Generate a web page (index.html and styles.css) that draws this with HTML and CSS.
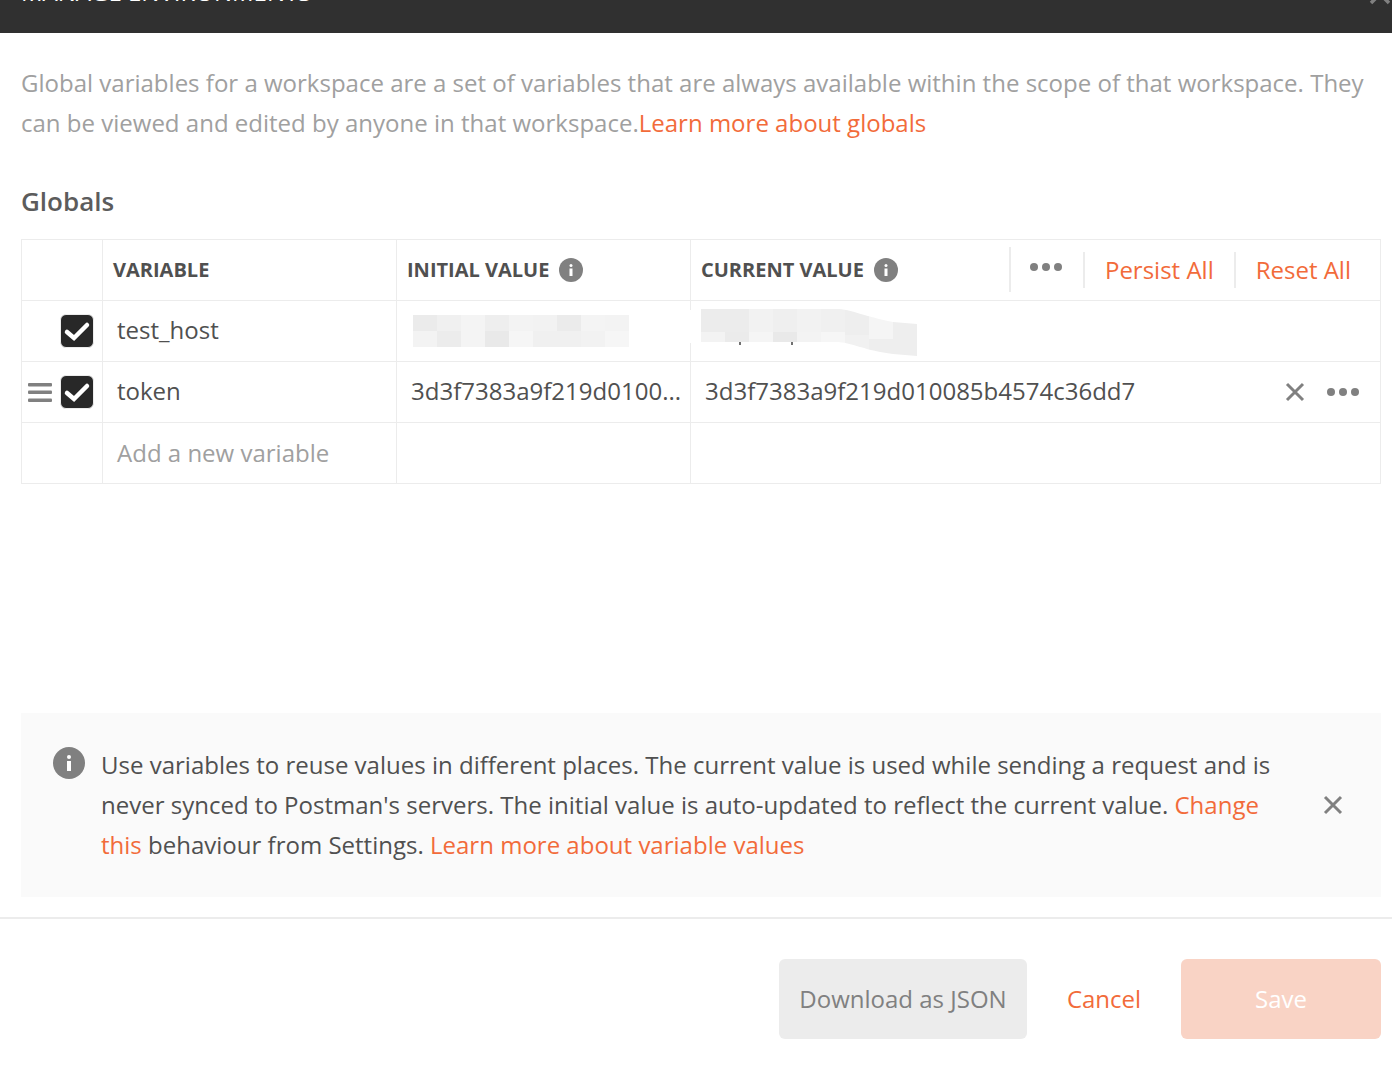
FILE: index.html
```html
<!DOCTYPE html>
<html lang="en">
<head>
  <meta charset="UTF-8">
  <meta name="viewport" content="width=device-width, initial-scale=1.0">
  <title>Manage Environments</title>
  <link rel="stylesheet" href="styles.css">
</head>
<body>
  <div class="modal">
    <!-- Header, scrolled mostly out of view -->
    <div class="modal-header">
      <span class="modal-title">MANAGE ENVIRONMENTS</span>
      <svg class="modal-close" width="30" height="30" viewBox="0 0 30 30"><path d="M6 6L24 24M24 6L6 24" stroke="#808080" stroke-width="3.5" fill="none"/></svg>
    </div>

    <div class="modal-body">
      <p class="intro">Global variables for a workspace are a set of variables that are always available within the scope of that workspace. They<br>can be viewed and edited by anyone in that workspace.<a class="link">Learn more about globals</a></p>
      <h2 class="section-title">Globals</h2>

      <div class="var-table">
        <div class="var-row head-row">
          <div class="cell"></div>
          <div class="cell head-cell">VARIABLE</div>
          <div class="cell head-cell">INITIAL VALUE
            <svg class="info-small" width="24" height="24" viewBox="0 0 24 24"><circle cx="12" cy="12" r="12" fill="#808080"/><rect x="10.5" y="10.5" width="3" height="7.5" fill="#fff"/><rect x="10.5" y="6" width="3" height="3" rx="1.5" fill="#fff"/></svg>
          </div>
          <div class="cell head-cell last-head">
            <span class="current-label">CURRENT VALUE
              <svg class="info-small" width="24" height="24" viewBox="0 0 24 24"><circle cx="12" cy="12" r="12" fill="#808080"/><rect x="10.5" y="10.5" width="3" height="7.5" fill="#fff"/><rect x="10.5" y="6" width="3" height="3" rx="1.5" fill="#fff"/></svg>
            </span>
            <div class="head-actions">
              <div class="sep sep-tall"></div>
              <svg class="head-dots" width="32" height="10" viewBox="0 0 32 10"><circle cx="4" cy="5" r="4" fill="#808080"/><circle cx="16" cy="5" r="4" fill="#808080"/><circle cx="28" cy="5" r="4" fill="#808080"/></svg>
              <div class="sep"></div>
              <a class="link persist">Persist All</a>
              <div class="sep"></div>
              <a class="link reset">Reset All</a>
            </div>
          </div>
        </div>

        <div class="var-row">
          <div class="cell check-cell">
            <span class="checkbox"><svg width="32" height="32" viewBox="0 0 32 32"><path d="M6 17L13 23L26 10" stroke="#fff" stroke-width="4.5" stroke-linecap="round" fill="none"/></svg></span>
          </div>
          <div class="cell text-cell">test_host</div>
          <div class="cell text-cell"></div>
          <div class="cell text-cell"></div>
          <!-- blurred out values -->
          <svg class="mosaic mosaic-initial" width="216" height="32" viewBox="0 0 216 32">
            <g>
              <rect width="24" height="16" fill="#ebebeb"/><rect x="24" width="24" height="16" fill="#f0f0f0"/><rect x="48" width="24" height="16" fill="#f4f4f4"/><rect x="72" width="24" height="16" fill="#eeeeee"/><rect x="96" width="24" height="16" fill="#f3f3f3"/><rect x="120" width="24" height="16" fill="#f2f2f2"/><rect x="144" width="24" height="16" fill="#ebebeb"/><rect x="168" width="24" height="16" fill="#f4f4f4"/><rect x="192" width="24" height="16" fill="#f3f3f3"/>
              <rect y="16" width="24" height="16" fill="#f3f3f3"/><rect x="24" y="16" width="24" height="16" fill="#ececec"/><rect x="48" y="16" width="24" height="16" fill="#f4f4f4"/><rect x="72" y="16" width="24" height="16" fill="#e9e9e9"/><rect x="96" y="16" width="24" height="16" fill="#f6f6f6"/><rect x="120" y="16" width="24" height="16" fill="#f0f0f0"/><rect x="144" y="16" width="24" height="16" fill="#f0f0f0"/><rect x="168" y="16" width="24" height="16" fill="#f2f2f2"/><rect x="192" y="16" width="24" height="16" fill="#f6f6f6"/>
            </g>
          </svg>
          <div class="mosaic line-patch"></div>
          <svg class="mosaic mosaic-current" width="216" height="50" viewBox="0 0 216 50">
            <clipPath id="current-shape"><path d="M0 0H135C150 0 165 8 192 13L216 15V47L192 45C165 42 150 33 135 33H0Z"/></clipPath>
            <g clip-path="url(#current-shape)">
              <rect width="24" height="23" fill="#ececec"/><rect x="24" width="24" height="23" fill="#ececec"/><rect x="48" width="24" height="23" fill="#f2f2f2"/><rect x="72" width="24" height="23" fill="#efefef"/><rect x="96" width="24" height="23" fill="#f2f2f2"/><rect x="120" width="24" height="23" fill="#f0f0f0"/><rect x="144" width="24" height="26" fill="#eeeeee"/><rect x="168" width="24" height="30" fill="#f5f5f5"/><rect x="192" width="24" height="50" fill="#eeeeee"/>
              <rect y="23" width="24" height="27" fill="#f3f3f3"/><rect x="24" y="23" width="24" height="27" fill="#ebebeb"/><rect x="48" y="23" width="24" height="27" fill="#f5f5f5"/><rect x="72" y="23" width="24" height="27" fill="#e9e9e9"/><rect x="96" y="23" width="24" height="27" fill="#f3f3f3"/><rect x="120" y="23" width="24" height="27" fill="#f6f6f6"/><rect x="144" y="26" width="24" height="24" fill="#f1f1f1"/><rect x="168" y="30" width="24" height="20" fill="#eeeeee"/>
            </g>
            <rect x="38" y="33" width="2" height="3" fill="#707070"/><rect x="90" y="33" width="2" height="3" fill="#707070"/>
          </svg>
        </div>

        <div class="var-row">
          <div class="cell check-cell">
            <svg class="drag" width="24" height="20" viewBox="0 0 24 20"><rect y="0" width="24" height="3.5" rx="1" fill="#808080"/><rect y="7.5" width="24" height="3.5" rx="1" fill="#808080"/><rect y="15.5" width="24" height="3.5" rx="1" fill="#808080"/></svg>
            <span class="checkbox"><svg width="32" height="32" viewBox="0 0 32 32"><path d="M6 17L13 23L26 10" stroke="#fff" stroke-width="4.5" stroke-linecap="round" fill="none"/></svg></span>
          </div>
          <div class="cell text-cell">token</div>
          <div class="cell text-cell value-initial">3d3f7383a9f219d0100...</div>
          <div class="cell text-cell value-current">
            <span>3d3f7383a9f219d010085b4574c36dd7</span>
            <div class="row-actions">
              <svg width="20" height="20" viewBox="0 0 20 20"><path d="M2 2L18 18M18 2L2 18" stroke="#808080" stroke-width="3" fill="none"/></svg>
              <svg width="32" height="10" viewBox="0 0 32 10"><circle cx="4" cy="5" r="4" fill="#808080"/><circle cx="16" cy="5" r="4" fill="#808080"/><circle cx="28" cy="5" r="4" fill="#808080"/></svg>
            </div>
          </div>
        </div>

        <div class="var-row">
          <div class="cell"></div>
          <div class="cell text-cell placeholder">Add a new variable</div>
          <div class="cell"></div>
          <div class="cell"></div>
        </div>
      </div>

      <div class="notice">
        <svg class="notice-icon" width="32" height="32" viewBox="0 0 32 32"><circle cx="16" cy="16" r="16" fill="#808080"/><rect x="14" y="14" width="4" height="10" fill="#fff"/><rect x="14" y="8" width="4" height="4" rx="2" fill="#fff"/></svg>
        <p class="notice-text">Use variables to reuse values in different places. The current value is used while sending a request and is<br>never synced to Postman's servers. The initial value is auto-updated to reflect the current value. <a class="link">Change<br>this</a> behaviour from Settings. <a class="link">Learn more about variable values</a></p>
        <svg class="notice-close" width="20" height="20" viewBox="0 0 20 20"><path d="M2 2L18 18M18 2L2 18" stroke="#808080" stroke-width="3" fill="none"/></svg>
      </div>
    </div>

    <div class="modal-footer">
      <button class="btn btn-grey">Download as JSON</button>
      <button class="btn btn-cancel">Cancel</button>
      <button class="btn btn-save">Save</button>
    </div>
  </div>
</body>
</html>
```

FILE: styles.css
```css
/* General styles */
html, body {
  margin: 0;
  height: 100%;
  overflow: hidden;
}

body {
  font-family: "Open Sans", sans-serif;
  font-size: 24.02px;
  color: #505050;
  background-color: #fff;
}

.link {
  color: #f26b3a;
}

/* Header */
.modal-header {
  height: 33px;
  background-color: #303030;
  display: flex;
  justify-content: space-between;
  align-items: flex-end;
  padding: 0 0 0 21px;
  overflow: hidden;
}

.modal-title {
  color: #fff;
  font-size: 24px;
  font-weight: 500;
  line-height: 40px;
  height: 40px;
  flex-shrink: 0;
  margin-bottom: 21px;
}

.modal-close {
  flex-shrink: 0;
  margin: 0 -3px 24px 0;
}

/* Body */
.modal-body {
  padding: 30px 11px 0 21px;
}

.intro {
  margin: 0;
  line-height: 40px;
  color: #a0a0a0;
  white-space: nowrap;
}

.section-title {
  margin: 38px 0 18px;
  font-size: 26px;
  font-weight: 600;
  line-height: 40px;
  color: #5c5c5c;
}

/* Variables table */
.var-table {
  border: 1px solid #ececec;
  border-bottom: 0;
}

.var-row {
  position: relative;
  display: grid;
  grid-template-columns: 81px 294px 294px 1fr;
  height: 61px;
  border-bottom: 1px solid #ececec;
  box-sizing: border-box;
}

.cell {
  display: flex;
  align-items: center;
  border-right: 1px solid #ececec;
  box-sizing: border-box;
  min-width: 0;
}

.cell:nth-child(4) {
  border-right: 0;
}

.head-cell {
  padding-left: 10px;
  padding-bottom: 2px;
  font-size: 20px;
  font-weight: 700;
  white-space: nowrap;
}

.info-small {
  margin: 2px 0 0 10px;
  flex-shrink: 0;
}

.current-label {
  display: flex;
  align-items: center;
}

.last-head {
  justify-content: space-between;
}

.head-actions {
  display: flex;
  align-items: center;
  font-size: 24px;
  font-weight: 400;
  margin: 2px 29px 0 0;
}

.sep {
  width: 2px;
  height: 36px;
  background-color: #ececec;
}

.sep-tall {
  height: 45px;
  margin-bottom: 2px;
}

.head-dots {
  margin: 0 21px 7px 19px;
}

.persist {
  margin: 0 20px;
  padding-bottom: 2px;
}

.reset {
  margin-left: 20px;
  padding-bottom: 2px;
}

.check-cell {
  justify-content: flex-end;
  padding-right: 8px;
}

.checkbox {
  display: block;
  width: 32px;
  height: 32px;
  background-color: #282828;
  border: 1px solid #ececec;
  border-radius: 6px;
}

.checkbox svg {
  display: block;
}

.drag {
  margin: 2px 8px 0 0;
}

.text-cell {
  padding-left: 14px;
  padding-bottom: 3px;
  white-space: nowrap;
}

.value-initial {
  overflow: hidden;
}

.value-current {
  justify-content: space-between;
}

.row-actions {
  display: flex;
  align-items: center;
  gap: 22px;
  margin: 3px 21px 0 0;
}

.placeholder {
  padding-bottom: 1px;
  color: #a0a0a0;
}

/* Blurred values lying over the row */
.mosaic {
  position: absolute;
}

.mosaic-initial {
  left: 391px;
  top: 14px;
}

.mosaic-current {
  left: 679px;
  top: 8px;
}

.line-patch {
  left: 664px;
  top: 9px;
  width: 12px;
  height: 33px;
  background-color: #fff;
}

/* Notice */
.notice {
  display: flex;
  align-items: flex-start;
  margin-top: 229px;
  padding: 32px 0;
  background-color: #fafafa;
}

.notice-icon {
  flex-shrink: 0;
  margin: 2px 16px 0 32px;
}

.notice-text {
  margin: 0;
  line-height: 40px;
  white-space: nowrap;
}

.notice-close {
  flex-shrink: 0;
  margin: 50px 38px 0 auto;
}

/* Footer */
.modal-footer {
  display: flex;
  justify-content: flex-end;
  margin-top: 20px;
  padding: 40px 11px 0 0;
  border-top: 2px solid #ececec;
}

.btn {
  height: 80px;
  padding: 0 0 2px;
  border: none;
  border-radius: 6px;
  font-family: "Open Sans", sans-serif;
  font-size: 24px;
}

.btn-grey {
  width: 248px;
  background-color: #ececec;
  color: #808080;
}

.btn-cancel {
  width: 154px;
  background-color: transparent;
  color: #f26b3a;
}

.btn-save {
  width: 200px;
  background-color: #f9d3c5;
  color: #fff;
}
```
